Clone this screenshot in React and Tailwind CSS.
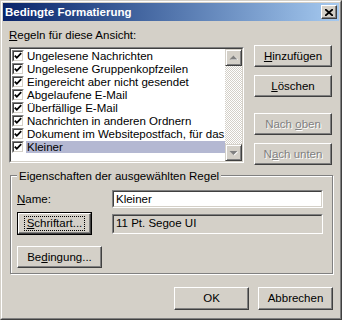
import React from 'react';

const rules = [
  'Ungelesene Nachrichten',
  'Ungelesene Gruppenkopfzeilen',
  'Eingereicht aber nicht gesendet',
  'Abgelaufene E-Mail',
  'Überfällige E-Mail',
  'Nachrichten in anderen Ordnern',
  'Dokument im Websitepostfach, für das Sie sich angemeldet haben',
  'Kleiner',
];

function Button({ children, className = '', disabled = false }) {
  return (
    <div
      className={`flex items-center justify-center border border-t-white border-l-white border-r-[#404040] border-b-[#404040] shadow-[inset_-1px_-1px_0_#808080] ${
        disabled ? 'text-[#808080] [text-shadow:1px_1px_0_#fff]' : 'text-black'
      } ${className}`}
    >
      {children}
    </div>
  );
}

function Sunken({ children, className = '', inner = '' }) {
  return (
    <div className={`border border-t-[#808080] border-l-[#808080] border-r-white border-b-white ${className}`}>
      <div className={`h-full border border-t-[#404040] border-l-[#404040] border-r-[#d4d0c8] border-b-[#d4d0c8] ${inner}`}>
        {children}
      </div>
    </div>
  );
}

function Check() {
  return (
    <div className="w-[12px] h-[12px] shrink-0 border border-t-[#808080] border-l-[#808080] border-r-white border-b-white">
      <div className="w-full h-full bg-white border border-t-[#404040] border-l-[#404040] border-r-[#d4d0c8] border-b-[#d4d0c8]">
        <svg width="8" height="8" viewBox="0 0 8 8" className="block">
          <polyline points="0.8,3.6 2.8,5.8 7.2,1.2" fill="none" stroke="#000" strokeWidth="1.8" />
        </svg>
      </div>
    </div>
  );
}

function Arrow({ up }) {
  return (
    <div className="w-[17px] h-[17px] bg-[#d4d0c8] border border-t-[#d4d0c8] border-l-[#d4d0c8] border-r-[#404040] border-b-[#404040] shadow-[inset_1px_1px_0_#fff,inset_-1px_-1px_0_#808080] flex items-center justify-center">
      <svg width="9" height="6" viewBox="0 0 9 6">
        {up ? (
          <>
            <polygon points="1.5,5 5.5,1 9.5,5" fill="#fff" />
            <polygon points="0.5,4.5 4.5,0.5 8.5,4.5" fill="#808080" />
          </>
        ) : (
          <>
            <polygon points="1.5,1.5 9.5,1.5 5.5,5.5" fill="#fff" />
            <polygon points="0.5,1 8.5,1 4.5,5" fill="#808080" />
          </>
        )}
      </svg>
    </div>
  );
}

export default function App() {
  return (
    <div className="w-[342px] h-[320px] bg-[#d4d0c8] font-['Liberation_Sans',Arial,sans-serif] text-[11.5px] leading-[13px] text-black border border-t-[#d4d0c8] border-l-[#d4d0c8] border-r-[#404040] border-b-[#404040]">
      <div className="h-full flex flex-col border border-t-white border-l-white border-r-[#808080] border-b-[#808080] p-px">
        {/* title bar */}
        <div className="h-[18px] shrink-0 flex items-center justify-between pl-[2px] pr-[2px] bg-gradient-to-r from-[#0a246a] to-[#a6caf0]">
          <span className="text-white font-bold text-[11.5px]">Bedingte Formatierung</span>
          <div className="w-[16px] h-[14px] bg-[#d4d0c8] border border-t-white border-l-white border-r-[#404040] border-b-[#404040] shadow-[inset_-1px_-1px_0_#808080] flex items-center justify-center">
            <svg width="8" height="7" viewBox="0 0 8 7">
              <path d="M0 0 L8 7 M8 0 L0 7" stroke="#000" strokeWidth="1.8" />
            </svg>
          </div>
        </div>

        <div className="flex-1 flex flex-col pl-[6px] pr-[6px]">
          <div className="flex items-start">
            <div className="w-[235px] shrink-0">
              <div className="mt-[7px] h-[14px] leading-[14px]">
                <span className="underline">R</span>egeln für diese Ansicht:
              </div>
              <Sunken className="mt-[5px] h-[116px]" inner="bg-white flex">
                <div className="flex-1 min-w-0 overflow-hidden">
                  {rules.map((r, i) => (
                    <div key={i} className="h-[13px] flex items-center">
                      <div className="ml-px mr-[2px]">
                        <Check />
                      </div>
                      <div
                        className={`flex-1 min-w-0 h-[12px] leading-[12px] pl-[1px] whitespace-nowrap overflow-hidden ${
                          i === rules.length - 1 ? 'bg-[#b4b8d2]' : ''
                        }`}
                      >
                        {r}
                      </div>
                    </div>
                  ))}
                </div>
                <div className="w-[17px] shrink-0 flex flex-col">
                  <Arrow up />
                  <div className="flex-1 bg-[repeating-conic-gradient(#d4d0c8_0_25%,#fff_0_50%)] bg-[length:2px_2px]" />
                  <Arrow />
                </div>
              </Sunken>
            </div>

            <div className="ml-[10px] w-[78px] mt-[24px] flex flex-col">
              <Button className="h-[22px]">
                <span><span className="underline">H</span>inzufügen</span>
              </Button>
              <Button className="h-[22px] mt-[8px]">
                <span><span className="underline">L</span>öschen</span>
              </Button>
              <Button className="h-[22px] mt-[16px]" disabled>
                <span>Nach <span className="underline">o</span>ben</span>
              </Button>
              <Button className="h-[22px] mt-[8px]" disabled>
                <span>N<span className="underline">a</span>ch unten</span>
              </Button>
            </div>
          </div>

          {/* group box */}
          <div className="relative ml-px mt-[10px] w-[323px] h-[99px] border border-[#808080] shadow-[inset_1px_1px_0_#fff,1px_1px_0_#fff] pl-[6px] pt-[14px]">
            <div className="absolute left-[6px] -top-[7px] px-[2px] bg-[#d4d0c8] leading-[14px]">
              Eigenschaften der ausgewählten Regel
            </div>
            <div className="flex items-center h-[18px]">
              <div className="w-[95px]">
                <span className="underline">N</span>ame:
              </div>
              <Sunken className="w-[211px] h-[18px]" inner="bg-white flex items-center pl-[2px]">
                Kleiner
              </Sunken>
            </div>
            <div className="flex items-center mt-[4px] h-[23px]">
              <div className="w-[75px] h-[23px] border border-black">
                <Button className="h-full w-full">
                  <span className="border border-dotted border-black px-[2px] leading-[13px]">
                    <span className="underline">S</span>chriftart...
                  </span>
                </Button>
              </div>
              <Sunken className="ml-[20px] w-[211px] h-[20px]" inner="flex items-center pl-[2px]">
                11 Pt. Segoe UI
              </Sunken>
            </div>
            <Button className="mt-[11px] w-[85px] h-[22px]">
              <span>Be<span className="underline">d</span>ingung...</span>
            </Button>
          </div>

          <div className="mt-[13px] flex justify-end gap-[9px]">
            <Button className="w-[75px] h-[23px]">OK</Button>
            <Button className="w-[75px] h-[23px]">Abbrechen</Button>
          </div>
        </div>
      </div>
    </div>
  );
}
